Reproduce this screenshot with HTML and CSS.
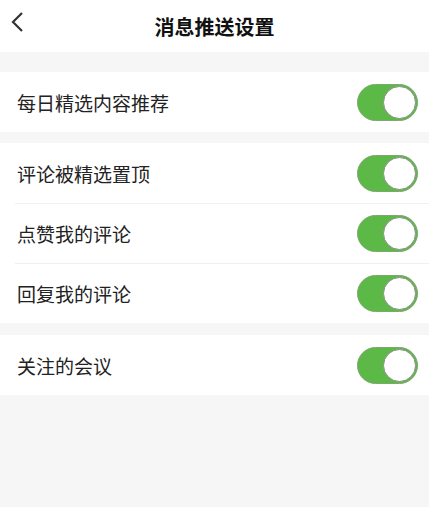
FILE: index.html
```html
<!DOCTYPE html>
<html lang="zh-CN">
<head>
    <meta charset="UTF-8">
    <meta name="viewport" content="width=device-width, initial-scale=1.0">
    <title>消息推送设置</title>
    <link rel="stylesheet" href="styles.css">
</head>
<body>

    <div class="header">
        <svg class="back" width="14" height="22" viewBox="0 0 14 22">
            <path d="M12 2 L3 11 L12 20" fill="none" stroke="#333" stroke-width="2.2"/>
        </svg>
        <h1>消息推送设置</h1>
    </div>

    <div class="group first">
        <div class="row"><span>每日精选内容推荐</span><span class="switch"></span></div>
    </div>

    <div class="group">
        <div class="row"><span>评论被精选置顶</span><span class="switch"></span></div>
        <div class="row"><span>点赞我的评论</span><span class="switch"></span></div>
        <div class="row"><span>回复我的评论</span><span class="switch"></span></div>
    </div>

    <div class="group last">
        <div class="row"><span>关注的会议</span><span class="switch"></span></div>
    </div>

</body>
</html>
```

FILE: styles.css
```css
body { margin: 0; background: #f6f6f6; font-family: "Noto Sans CJK SC", "Noto Sans", sans-serif; color: #222; }
.header { height: 52px; background: white; display: flex; align-items: center; justify-content: center; position: relative; }
.header h1 { margin: 0; font-size: 20px; font-weight: bold; color: #111; }
.back { position: absolute; left: 10px; top: 11px; }
.group { background: white; margin-top: 11px; }
.group.first { margin-top: 20px; }
.group.last { margin-top: 12px; }
.row { height: 60px; display: flex; align-items: center; justify-content: space-between; padding: 0 11px 0 17px; font-size: 19px; position: relative; }
.row + .row::before { content: ""; position: absolute; left: 15px; right: 0; top: 0; border-top: 1px solid #f0f0f0; }
.switch { width: 61px; height: 37px; border-radius: 19px; background: #5cb947; position: relative; box-sizing: border-box; border: 1px solid #7fa86f; }
.switch::after { content: ""; position: absolute; right: 1px; top: 1px; width: 31px; height: 31px; border-radius: 50%; background: white; border: 1.5px solid #8a8f86; }
```
